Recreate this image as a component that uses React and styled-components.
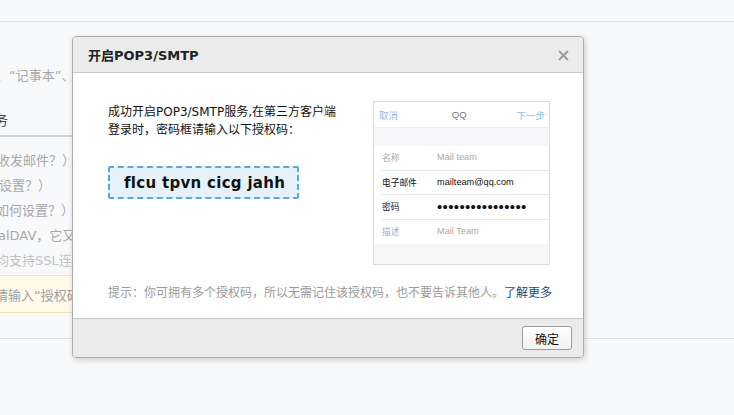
import React from 'react';
import styled, { createGlobalStyle } from 'styled-components';

const GlobalStyle = createGlobalStyle`
  html, body {
    margin: 0;
    padding: 0;
    background: #f8f9fb;
    overflow: hidden;
  }
  * { box-sizing: border-box; }
`;

const FONT = '"DejaVu Sans", "Noto Sans CJK SC", sans-serif';
const PHONE_FONT = '"Liberation Sans", "Noto Sans CJK SC", sans-serif';

const Page = styled.div`
  position: relative;
  width: 734px;
  height: 415px;
  overflow: hidden;
  font-family: ${FONT};
  background: #f8f9fb;
`;

const TopBar = styled.div`
  height: 22px;
  border-bottom: 1px solid #e2e4ea;
`;

const Content = styled.div`
  padding-top: 45px;
`;

const Section = styled.div`
  width: 480px;
`;

const Line = styled.div`
  font-size: 13px;
  line-height: 18px;
  color: ${(p) => p.color || '#a8a8a8'};
  white-space: nowrap;
  text-indent: ${(p) => p.shift || 0}px;
`;

const Heading = styled.div`
  margin-top: 25px;
  font-size: 14px;
  line-height: 20px;
  color: #444;
  text-indent: -6px;
  padding-bottom: 5px;
  border-bottom: 2px solid #d2d3d6;
`;

const List = styled.div`
  padding-top: 15px;
  display: flex;
  flex-direction: column;
  gap: 7px;
`;

const Notice = styled.div`
  margin-top: 5px;
  height: 38px;
  display: flex;
  align-items: center;
  background: #fffaea;
  border-top: 1px solid #f5e6b5;
  border-bottom: 1px solid #f5e6b5;
  font-size: 13px;
  color: #a0a0a0;
  white-space: nowrap;
  text-indent: -5px;
`;

const Divider = styled.div`
  margin-top: 25px;
  border-top: 1px solid #dfe2e9;
`;

const Modal = styled.div`
  position: absolute;
  left: 72px;
  top: 36px;
  width: 512px;
  height: 322px;
  display: flex;
  flex-direction: column;
  background: #fff;
  border: 1px solid #acacac;
  border-radius: 4px;
  box-shadow: 1px 2px 6px rgba(0, 0, 0, 0.18);
  overflow: hidden;
`;

const Header = styled.div`
  height: 36px;
  flex-shrink: 0;
  display: flex;
  align-items: center;
  justify-content: space-between;
  padding: 0 14px 0 15px;
  background: #ebebeb;
  border-bottom: 1px solid #c9c9c9;
`;

const Title = styled.div`
  font-size: 13px;
  font-weight: bold;
  color: #222;
`;

const Close = styled.svg`
  width: 11px;
  height: 11px;
  margin-top: 1px;
`;

const Body = styled.div`
  flex: 1;
  padding: 28px 33px 0 35px;
  display: flex;
  flex-direction: column;
`;

const Row = styled.div`
  display: flex;
  justify-content: space-between;
`;

const Intro = styled.div`
  margin-top: 2px;
  font-size: 12px;
  line-height: 18px;
  color: #111;
`;

const CodeBox = styled.div`
  margin-top: 27px;
  width: 191px;
  height: 33px;
  display: flex;
  align-items: center;
  padding-left: 14px;
  background: #e6f2fa;
  border: 2px dashed #5aaad6;
  border-radius: 2px;
  font-size: 15px;
  font-weight: bold;
  letter-spacing: 0.3px;
  color: #111;
`;

const Phone = styled.div`
  width: 177px;
  height: 164px;
  display: flex;
  flex-direction: column;
  border: 1px solid #dcdcdc;
  font-family: ${PHONE_FONT};
  background: #fff;
`;

const PhoneHeader = styled.div`
  height: 26px;
  flex-shrink: 0;
  display: flex;
  align-items: center;
  justify-content: space-between;
  padding: 0 4px 0 5px;
  font-size: 9.5px;
  border-bottom: 1px solid #f0f0f0;
`;

const PhoneLink = styled.span`
  color: #8fbbe8;
`;

const PhoneTitle = styled.span`
  color: #777;
  margin-left: 4px;
`;

const Band = styled.div`
  background: #f6f6f8;
  height: ${(p) => (p.h ? `${p.h}px` : 'auto')};
  flex: ${(p) => (p.h ? '0 0 auto' : 1)};
`;

const Field = styled.div`
  height: 24.5px;
  margin-left: 8px;
  display: flex;
  align-items: center;
  border-bottom: ${(p) => (p.last ? 'none' : '1px solid #e9e9e9')};
  color: ${(p) => (p.dim ? '#aaa' : '#111')};
`;

const FieldLabel = styled.span`
  width: 55px;
  font-size: 8.7px;
`;

const FieldValue = styled.span`
  font-size: ${(p) => (p.dots ? '15px' : '9.2px')};
  letter-spacing: ${(p) => (p.dots ? '0.35px' : '0')};
  line-height: 1;
`;

const Hint = styled.div`
  margin-top: 19px;
  font-size: 12px;
  line-height: 18px;
  color: #9a9a9a;
  white-space: nowrap;
`;

const More = styled.a`
  color: #1f4a7c;
  text-decoration: none;
`;

const Footer = styled.div`
  height: 39px;
  flex-shrink: 0;
  display: flex;
  align-items: center;
  justify-content: flex-end;
  padding-right: 11px;
  background: #ebebeb;
  border-top: 1px solid #c9c9c9;
`;

const Button = styled.button`
  width: 50px;
  height: 24px;
  padding: 0;
  border: 1px solid #9c9c9c;
  border-radius: 3px;
  background: linear-gradient(#ffffff, #f1f1f1);
  font-family: ${FONT};
  font-size: 12px;
  color: #111;
`;

const fields = [
  { label: '名称', value: 'Mail team', dim: true },
  { label: '电子邮件', value: 'mailteam@qq.com' },
  { label: '密码', value: '••••••••••••••••', dots: true },
  { label: '描述', value: 'Mail Team', dim: true, last: true },
];

export default function App() {
  return (
    <Page>
      <GlobalStyle />
      <TopBar />
      <Content>
        <Section>
          <Line shift={-4}>、“记事本”、“日历”等应用</Line>
          <Heading>务</Heading>
          <List>
            <Line shift={-3}>收发邮件？）</Line>
            <Line shift={-1}>设置？）</Line>
            <Line shift={-4}>如何设置？）</Line>
            <Line shift={-2}>alDAV，它又是如何设置？）</Line>
            <Line shift={-4} color="#c2c2c2">均支持SSL连接。如何设置？）</Line>
          </List>
          <Notice>请输入“授权码”</Notice>
        </Section>
        <Divider />
      </Content>

      <Modal>
        <Header>
          <Title>开启POP3/SMTP</Title>
          <Close viewBox="0 0 11 11">
            <path d="M1 1 L10 10 M10 1 L1 10" stroke="#9a9a9a" strokeWidth="1.8" />
          </Close>
        </Header>
        <Body>
          <Row>
            <div>
              <Intro>
                成功开启POP3/SMTP服务,在第三方客户端
                <br />
                登录时，密码框请输入以下授权码：
              </Intro>
              <CodeBox>flcu tpvn cicg jahh</CodeBox>
            </div>
            <Phone>
              <PhoneHeader>
                <PhoneLink>取消</PhoneLink>
                <PhoneTitle>QQ</PhoneTitle>
                <PhoneLink>下一步</PhoneLink>
              </PhoneHeader>
              <Band h={18} />
              {fields.map((f) => (
                <Field key={f.label} dim={f.dim} last={f.last}>
                  <FieldLabel>{f.label}</FieldLabel>
                  <FieldValue dots={f.dots}>{f.value}</FieldValue>
                </Field>
              ))}
              <Band />
            </Phone>
          </Row>
          <Hint>
            提示：你可拥有多个授权码，所以无需记住该授权码，也不要告诉其他人。<More href="#">了解更多</More>
          </Hint>
        </Body>
        <Footer>
          <Button>确定</Button>
        </Footer>
      </Modal>
    </Page>
  );
}
